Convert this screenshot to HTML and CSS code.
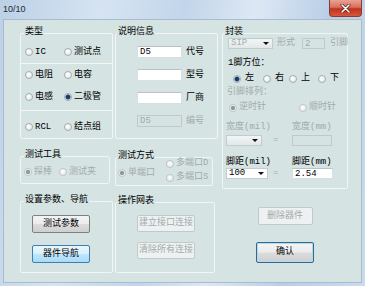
FILE: index.html
```html
<!doctype html>
<html lang="zh-CN">
  <head>
    <meta charset="UTF-8" />
    <meta name="viewport" content="width=device-width, initial-scale=1.0" />
    <title>10/10</title>
    <link rel="stylesheet" href="styles.css">
  </head>
  <body>
    <div class="window">
      <div class="titlebar">
        <span class="title">10/10</span>
        <span class="close">
          <svg width="11" height="9" viewBox="0 0 11 9">
            <path d="M2 1 L9 8 M9 1 L2 8" stroke="#5a1a14" stroke-width="3" stroke-linecap="round" />
            <path d="M2 1 L9 8 M9 1 L2 8" stroke="#ffffff" stroke-width="1.6" stroke-linecap="round" />
          </svg>
        </span>
      </div>

      <div class="client">
        <!-- left column -->
        <div class="col col-left">
          <div class="group type-group">
            <div class="legend"><span>类型</span></div>
            <div class="section s1">
              <div class="opt"><span class="radio"></span>IC</div>
              <div class="opt"><span class="radio"></span>测试点</div>
            </div>
            <div class="section s2">
              <div class="opt"><span class="radio"></span>电阻</div>
              <div class="opt"><span class="radio"></span>电容</div>
              <div class="opt"><span class="radio"></span>电感</div>
              <div class="opt"><span class="radio on"></span>二极管</div>
            </div>
            <div class="section s3">
              <div class="opt"><span class="radio"></span>RCL</div>
              <div class="opt"><span class="radio"></span>结点组</div>
            </div>
          </div>

          <div class="group tool-group">
            <div class="legend"><span>测试工具</span></div>
            <div class="tool-row dis">
              <div class="opt"><span class="radio on"></span>探棒</div>
              <div class="opt"><span class="radio"></span>测试夹</div>
            </div>
          </div>

          <div class="group nav-group">
            <div class="legend"><span>设置参数、导航</span></div>
            <div class="btn-stack">
              <div class="btn">测试参数</div>
              <div class="btn hot">器件导航</div>
            </div>
          </div>
        </div>

        <!-- middle column -->
        <div class="col col-mid">
          <div class="group info-group">
            <div class="legend"><span>说明信息</span></div>
            <div class="info-rows">
              <div class="info-row"><span class="field">D5</span>代号</div>
              <div class="info-row"><span class="field"></span>型号</div>
              <div class="info-row"><span class="field"></span>厂商</div>
              <div class="info-row dis"><span class="field off">D5</span>编号</div>
            </div>
          </div>

          <div class="group mode-group">
            <div class="legend"><span>测试方式</span></div>
            <div class="mode-row dis">
              <div class="opt single"><span class="radio on"></span>单端口</div>
              <div class="multi">
                <div class="opt"><span class="radio"></span>多端口D</div>
                <div class="opt"><span class="radio"></span>多端口S</div>
              </div>
            </div>
          </div>

          <div class="group net-group">
            <div class="legend"><span>操作网表</span></div>
            <div class="btn-stack">
              <div class="btn dis">建立接口连接</div>
              <div class="btn dis">清除所有连接</div>
            </div>
          </div>
        </div>

        <!-- right column -->
        <div class="col col-right">
          <div class="group pkg-group">
            <div class="legend"><span>封装</span></div>
            <div class="pkg-top">
              <span class="combo off sip">SIP<i class="arrow"></i></span>
              <span class="dim form-label">形式</span>
              <span class="field off pins">2</span>
              <span class="dim pins-label">引脚</span>
            </div>
            <div class="pkg-label first">1脚方位：</div>
            <div class="dir-row">
              <div class="opt w30"><span class="radio on"></span>左</div>
              <div class="opt w26"><span class="radio"></span>右</div>
              <div class="opt w29"><span class="radio"></span>上</div>
              <div class="opt"><span class="radio"></span>下</div>
            </div>
            <div class="pkg-label dim order">引脚排列：</div>
            <div class="order-row dis">
              <div class="opt w70"><span class="radio on"></span>逆时针</div>
              <div class="opt"><span class="radio"></span>顺时针</div>
            </div>
            <div class="size-grid dim width-labels">
              <span>宽度(mil)</span><span></span><span>宽度(mm)</span>
            </div>
            <div class="size-grid width-row">
              <span class="combo off w36"><i class="arrow"></i></span>
              <span class="eq dim">=</span>
              <span class="field off w40"></span>
            </div>
            <div class="size-grid pitch-labels">
              <span>脚距(mil)</span><span></span><span>脚距(mm)</span>
            </div>
            <div class="size-grid">
              <span class="combo w42">100<i class="arrow"></i></span>
              <span class="eq dim">=</span>
              <span class="field w41">2.54</span>
            </div>
          </div>

          <div class="actions">
            <div class="btn dis del">删除器件</div>
            <div class="btn default ok">确认</div>
          </div>
        </div>
      </div>
    </div>
  </body>
</html>
```

FILE: styles.css
```css
body {
  margin: 0;
  font-family: "Liberation Mono", "Noto Sans CJK SC", monospace;
  font-size: 9px;
  line-height: 11px;
  color: #000;
  white-space: nowrap;
}

.window {
  width: 365px;
  height: 286px;
  box-sizing: border-box;
  padding: 0 3px 3px 3px;
  display: flex;
  flex-direction: column;
  background: linear-gradient(100deg, #bcd0e6 0%, #d6e4f2 25%, #c2d5ea 45%, #dde8f4 62%, #b9cee6 80%, #cbdbed 100%);
}

.titlebar {
  height: 19px;
  flex: none;
  display: flex;
  justify-content: space-between;
  align-items: flex-start;
}

.title {
  font-family: "Liberation Sans", sans-serif;
  font-size: 9px;
  line-height: 18px;
  color: #1e2a36;
}

.close {
  width: 33px;
  height: 17px;
  box-sizing: border-box;
  display: flex;
  align-items: center;
  justify-content: center;
  border: 1px solid #8a3a30;
  border-top: none;
  border-radius: 0 0 4px 4px;
  background: linear-gradient(#e9a294 0%, #d8705e 45%, #c2321e 55%, #d8553c 100%);
}

.client {
  flex: 1;
  box-sizing: border-box;
  border: 1px solid #a9bccf;
  background: #d5e3e2;
  padding: 13px 0 0 16px;
  display: flex;
}

.col {
  display: flex;
  flex-direction: column;
}

.col-left {
  width: 93px;
}

.col-mid {
  width: 103px;
  margin-left: 2px;
}

.col-right {
  width: 126px;
  margin-left: 4px;
}

.group {
  box-sizing: border-box;
  border: 1px solid #f0f6f5;
  border-radius: 2px;
}

.legend {
  display: flex;
  margin: -7px 0 -4px 1px;
}

.legend span {
  background: #d5e3e2;
  padding: 0 1px;
}

.col-left .legend {
  margin-left: 3px;
}

.dim,
.dis {
  color: #a2abab;
}

/* radio buttons */
.opt {
  display: flex;
  align-items: center;
  gap: 2px;
  height: 12px;
}

.radio {
  flex: none;
  width: 8px;
  height: 8px;
  box-sizing: border-box;
  border: 1px solid #a3acb0;
  border-radius: 50%;
  background: radial-gradient(circle at 40% 35%, #ffffff, #dde3e5);
}

.radio.on {
  background: radial-gradient(circle, #173f66 0 1.8px, #5f86a8 2.4px, #eef3f5 3px);
}

.dis .radio {
  border-color: #bcc5c7;
}

.dis .radio.on {
  background: radial-gradient(circle, #8d999b 0 1.8px, #eef2f2 2.5px);
}

/* 类型 */
.type-group {
  height: 106px;
}

.section {
  box-sizing: border-box;
  display: grid;
  grid-template-columns: 39px 1fr;
  align-content: start;
  row-gap: 10px;
  padding-left: 4px;
}

.s1 {
  height: 30px;
  padding-top: 12px;
  border-bottom: 1px solid #f0f6f5;
}

.s2 {
  height: 47px;
  padding-top: 5px;
  border-bottom: 1px solid #f0f6f5;
}

.s3 {
  height: 27px;
  padding-top: 10px;
}

/* 测试工具 */
.tool-group {
  width: 90px;
  height: 28px;
  margin-top: 17px;
}

.tool-row {
  display: grid;
  grid-template-columns: 35px 1fr;
  padding: 9px 0 0 3px;
}

/* buttons */
.nav-group {
  height: 72px;
  margin-top: 17px;
}

.btn-stack {
  display: flex;
  flex-direction: column;
  padding: 13px 0 0 11px;
  gap: 12px;
}

.btn {
  width: 58px;
  height: 18px;
  box-sizing: border-box;
  display: flex;
  align-items: center;
  justify-content: center;
  border: 1px solid #7c8080;
  border-radius: 2px;
  background: linear-gradient(#f4f4f4 0%, #ececec 48%, #dcdcdc 52%, #cfcfcf 100%);
}

.btn.hot {
  border-color: #3c7fb1;
  background: linear-gradient(#eaf6fd 0%, #d9f0fc 48%, #bee6fd 52%, #a9dbf6 100%);
}

.btn.dis {
  border-color: #c3c9ca;
  background: #eef1f1;
  color: #a2abab;
}

.btn.default {
  border-color: #3b6688;
  box-shadow: inset 0 0 0 1px #a6def5;
}

/* 说明信息 */
.info-group {
  height: 106px;
}

.info-rows {
  display: flex;
  flex-direction: column;
  gap: 11px;
  padding: 12px 0 0 21px;
}

.info-row {
  display: flex;
  align-items: center;
  gap: 4px;
  height: 12px;
}

.field {
  display: block;
  flex: none;
  width: 45px;
  height: 12px;
  box-sizing: border-box;
  border: 1px solid #d7dfe0;
  border-top-color: #b9c3c6;
  background: #fff;
  padding-left: 2px;
  line-height: 10px;
}

.field.off {
  background: #d5e3e2;
  border-color: #bfcacb;
  color: #a2abab;
}

/* 测试方式 */
.mode-group {
  width: 98px;
  height: 29px;
  margin-top: 18px;
}

.mode-row {
  display: flex;
  padding-left: 2px;
}

.single {
  width: 48px;
  flex: none;
  margin-top: 9px;
}

.multi {
  display: flex;
  flex-direction: column;
  gap: 3px;
}

.multi .opt {
  height: 11px;
}

/* 操作网表 */
.net-group {
  width: 100px;
  height: 71px;
  margin-top: 16px;
}

.net-group .btn-stack {
  padding: 12px 0 0 21px;
  gap: 10px;
}

.net-group .btn {
  height: 17px;
}

/* 封装 */
.pkg-group {
  height: 156px;
}

.pkg-top {
  display: flex;
  align-items: center;
  height: 11px;
  margin-top: 4px;
  padding-left: 5px;
}

.pkg-top > span {
  flex: none;
}

.combo {
  display: flex;
  align-items: center;
  justify-content: space-between;
  flex: none;
  height: 11px;
  box-sizing: border-box;
  border: 1px solid #c2ccce;
  background: #fff;
  padding: 0 3px 0 2px;
  line-height: 9px;
}

.combo.off {
  background: linear-gradient(#f2f5f5, #e2e8e8);
  color: #a2abab;
  justify-content: flex-end;
}

.combo.sip {
  width: 45px;
  justify-content: space-between;
}

.arrow {
  width: 0;
  height: 0;
  border-left: 3px solid transparent;
  border-right: 3px solid transparent;
  border-top: 3px solid #111;
}

.form-label {
  margin-left: 4px;
}

.pins {
  width: 23px;
  height: 11px;
  margin-left: 7px;
}

.pins-label {
  margin-left: 5px;
}

.pkg-label {
  height: 11px;
  padding-left: 5px;
}

.pkg-label.first {
  margin-top: 9px;
}

.dir-row {
  display: flex;
  margin-top: 4px;
  padding-left: 10px;
}

.dir-row .opt {
  height: 11px;
  gap: 4px;
  flex: none;
}

.w30 {
  width: 30px;
}

.w26 {
  width: 26px;
}

.w29 {
  width: 29px;
}

.w70 {
  width: 70px;
  flex: none;
}

.order {
  margin-top: 3px;
  padding-left: 4px;
}

.order-row {
  display: flex;
  margin-top: 4px;
  padding-left: 6px;
}

.order-row .opt {
  height: 11px;
}

.size-grid {
  display: grid;
  grid-template-columns: 44px 22px 1fr;
  align-items: center;
  height: 11px;
  padding-left: 3px;
}

.width-labels {
  margin-top: 9px;
}

.width-row {
  margin-top: 2px;
}

.pitch-labels {
  margin-top: 11px;
}

.eq {
  padding-left: 3px;
}

.w36 {
  width: 36px;
}

.w40 {
  width: 40px;
}

.w42 {
  width: 42px;
}

.w41 {
  width: 41px;
}

.size-grid .field {
  height: 11px;
}

/* actions */
.actions {
  display: flex;
  flex-direction: column;
  align-items: center;
  gap: 17px;
  margin-top: 18px;
}

.del {
  width: 55px;
}

.ok {
  height: 21px;
}
```
